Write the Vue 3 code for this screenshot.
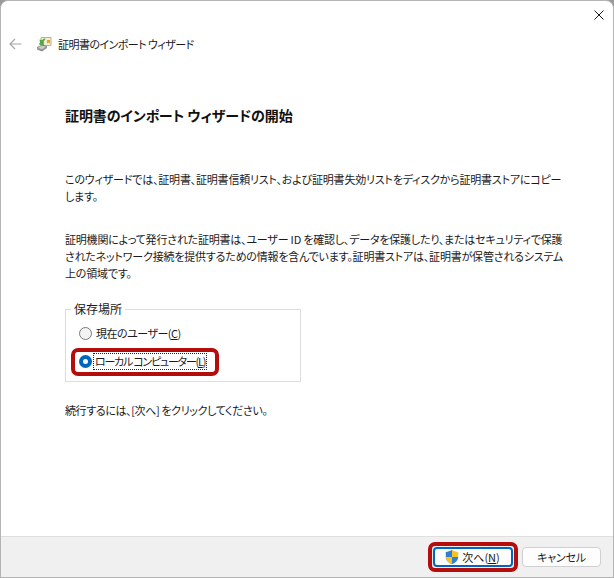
<script setup>
const paragraphs = [
  ['このウィザードでは、証明書、証明書信頼リスト、および証明書失効リストをディスクから証明書ストアにコピー', 'します。'],
  ['証明機関によって発行された証明書は、ユーザー ID を確認し、データを保護したり、またはセキュリティで保護', 'されたネットワーク接続を提供するための情報を含んでいます。証明書ストアは、証明書が保管されるシステム', '上の領域です。'],
]
</script>

<template>
  <div class="window">
    <div class="titlebar">
      <svg class="close" width="10" height="10" viewBox="0 0 10 10"><path d="M.5.5l9 9M9.500.5l-9 9" stroke="#1a1a1a" stroke-width="1" fill="none"/></svg>
    </div>
    <div class="nav">
      <svg class="back" width="13" height="12" viewBox="0 0 13 12"><path d="M12.500 6H1M6 1L1 6l5 5" stroke="#a6a6a6" stroke-width="1.200" fill="none"/></svg>
      <svg class="wiz" width="16" height="16" viewBox="0 0 16 16">
        <path d="M5 1.500h10v8H5z" fill="#f5ecd2" stroke="#b9b29a" stroke-width="1"/>
        <path d="M11 4h3v3.500l-1.500-1-1.500 1z" fill="#e8a21c"/>
        <path d="M1 11.500l5-2.500 5 1.500-5 3.500z" fill="#c9ccc9" stroke="#7d807d" stroke-width=".8"/>
        <path d="M1 12v1.500l5 2 5-3.500v-1.500l-5 3.500z" fill="#8e918e"/>
        <path d="M8.500 2.500L6 4.500 3.800 3.800 4.500 7 3 8l4.500 1.500L7.500 5.500 6.200 6.300 9 3.500z" fill="#4cae3c" stroke="#2f8a2b" stroke-width=".4"/>
      </svg>
      <span class="nav-title">証明書のインポート ウィザード</span>
    </div>

    <main class="content">
      <h1 class="heading">証明書のインポート ウィザードの開始</h1>
      <p v-for="(lines, i) in paragraphs" :key="i" class="para">
        <span v-for="line in lines" :key="line" class="line">{{ line }}</span>
      </p>

      <fieldset class="group">
        <legend>保存場所</legend>
        <label class="radio-row first">
          <span class="radio"></span>
          <span class="label-current">現在のユーザー(<u>C</u>)</span>
        </label>
        <label class="radio-row highlighted">
          <span class="radio checked"></span>
          <span class="focus">ローカル コンピューター(<u>L</u>)</span>
        </label>
      </fieldset>

      <p class="continue">続行するには、[次へ] をクリックしてください。</p>
    </main>

    <footer class="footer">
      <div class="next-ring">
        <button class="btn primary" type="button">
          <svg width="16" height="16" viewBox="0 0 16 16">
            <path d="M8 .8C6 2.300 4 2.800 1.800 2.900V8c0 3.200 2.500 5.700 6.200 7.200z" fill="#2f7fd6"/>
            <path d="M8 .8c2 1.500 4 2 6.200 2.100V8H8z" fill="#f6c324"/>
            <path d="M1.800 8H8v7.200C4.300 13.700 1.800 11.200 1.800 8z" fill="#f6c324"/>
            <path d="M8 8h6.200c0 3.200-2.500 5.700-6.200 7.200z" fill="#2f7fd6"/>
          </svg>
          <span>次へ(<u>N</u>)</span>
        </button>
      </div>
      <button class="btn cancel" type="button">キャンセル</button>
    </footer>
  </div>
</template>

<style>
html, body { margin: 0; background: #9a9a9a; }
</style>

<style scoped>
.window {
  box-sizing: border-box;
  width: 614px;
  height: 578px;
  display: flex;
  flex-direction: column;
  background: #fff;
  border: 1px solid #b4b4b4;
  border-radius: 8px 8px 0 0;
  overflow: hidden;
  color: #1a1a1a;
  font-family: "Noto Sans CJK JP", "Noto Sans", sans-serif;
  font-size: 11px;
  font-feature-settings: "palt";
}
.titlebar {
  height: 28px;
  display: flex;
  justify-content: flex-end;
  align-items: flex-start;
  padding: 9px 9px 0 0;
  box-sizing: border-box;
}
.close { display: block; }
.nav {
  height: 30px;
  display: flex;
  align-items: center;
  padding-left: 8px;
}
.back { margin-right: 14px; }
.wiz { margin-right: 6px; }
.nav-title { letter-spacing: -.55px; }
.content {
  flex: 1;
  padding: 0 0 0 64px;
}
.heading {
  margin: 41px 0 0;
  font-size: 14px;
  line-height: 30px;
  font-weight: 700;
  letter-spacing: -.1px;
  color: #111;
}
.para {
  margin: 41px 0 0;
  line-height: 17px;
  letter-spacing: -.2px;
}
.para + .para { margin-top: 26px; }
.line { display: block; white-space: nowrap; }
.group {
  box-sizing: border-box;
  width: 236px;
  height: 82px;
  margin: 18px 0 0;
  padding: 0;
  border: 1px solid #dcdcdc;
  min-width: 0;
}
.group legend {
  margin-left: 5px;
  padding: 0 3px;
  line-height: 18px;
  font-size: 12px;
}
.radio-row {
  display: flex;
  align-items: center;
  gap: 4px;
  margin-left: 13px;
  height: 18px;
  white-space: nowrap;
}
.radio-row.first { margin-top: 6px; }
.label-current { letter-spacing: -.5px; }
.highlighted {
  position: relative;
  margin-top: 10px;
}
.highlighted::before {
  content: "";
  position: absolute;
  left: -8px;
  top: -4px;
  width: 148px;
  height: 28px;
  box-sizing: border-box;
  border: 4px solid #b50c0c;
  border-radius: 7px;
}
.radio {
  box-sizing: border-box;
  width: 13px;
  height: 13px;
  border-radius: 50%;
  border: 1px solid #7a7a7a;
  background: #f3f3f3;
  flex: none;
}
.radio.checked {
  border: 4px solid #0067c0;
  background: #fff;
}
.focus {
  outline: 1px dotted #222;
  outline-offset: 0;
  padding: 0 1px;
  margin-left: -2px;
  line-height: 15px;
  letter-spacing: -1.250px;
  position: relative;
}
.continue {
  margin: 20px 0 0;
  line-height: 17px;
  letter-spacing: -.38px;
}
.footer {
  height: 41px;
  box-sizing: border-box;
  background: #f0f0f0;
  border-top: 1px solid #dfdfdf;
  display: flex;
  align-items: center;
  justify-content: flex-end;
  padding-right: 12px;
  gap: 4px;
}
.next-ring {
  box-sizing: border-box;
  height: 30px;
  width: 90px;
  border: 4px solid #b50c0c;
  border-radius: 7px;
  padding: 1px;
  display: flex;
}
.btn {
  box-sizing: border-box;
  font: inherit;
  font-feature-settings: "palt";
  color: #1a1a1a;
  background: #fdfdfd;
  border: 1px solid #d0d0d0;
  border-radius: 4px;
  padding: 0;
  display: flex;
  align-items: center;
  justify-content: center;
}
.primary {
  width: 100%;
  height: 100%;
  gap: 2px;
  border: 2px solid #0067c0;
  padding-right: 2px;
}
.cancel {
  width: 79px;
  height: 20px;
  letter-spacing: -.2px;
}
</style>
